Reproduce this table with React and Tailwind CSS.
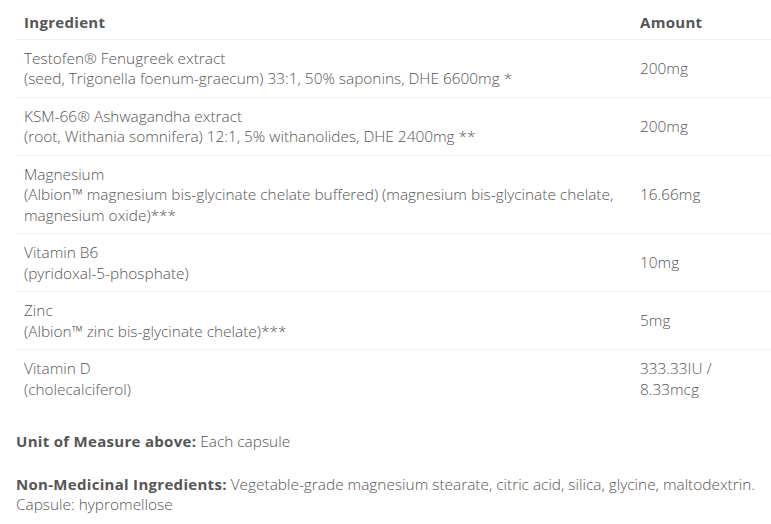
const rows = [
  {
    name: "Testofen® Fenugreek extract",
    detail: "(seed, Trigonella foenum-graecum) 33:1, 50% saponins, DHE 6600mg *",
    amount: "200mg",
  },
  {
    name: "KSM-66® Ashwagandha extract",
    detail: "(root, Withania somnifera) 12:1, 5% withanolides, DHE 2400mg **",
    amount: "200mg",
  },
  {
    name: "Magnesium",
    detail:
      "(Albion™ magnesium bis-glycinate chelate buffered) (magnesium bis-glycinate chelate, magnesium oxide)***",
    amount: "16.66mg",
  },
  { name: "Vitamin B6", detail: "(pyridoxal-5-phosphate)", amount: "10mg" },
  { name: "Zinc", detail: "(Albion™ zinc bis-glycinate chelate)***", amount: "5mg" },
  { name: "Vitamin D", detail: "(cholecalciferol)", amount: "333.33IU / 8.33mcg" },
];

export default function App() {
  return (
    <div className="pl-4 bg-white text-[#555] text-[15.4px] leading-[20.5px] font-light font-['Open_Sans',sans-serif]">
      {/* Table */}
      <table className="w-full border-collapse">
        <thead>
          <tr className="border-b border-[#efefef]">
            <th className="text-left text-[15px] font-bold tracking-[0.3px] px-2 pt-[12px] pb-[6px]">Ingredient</th>
            <th className="text-left text-[15px] font-bold tracking-[0.3px] px-2 pt-[12px] pb-[6px] w-[139px]">Amount</th>
          </tr>
        </thead>
        <tbody>
          {rows.map((r, i) => (
            <tr
              key={r.name}
              className={i < rows.length - 1 ? "border-b border-[#efefef]" : ""}
            >
              <td className="align-top px-2 pt-[9px] pb-[7px]">
                {r.name}
                <br />
                {r.detail}
              </td>
              <td className="align-middle px-2 pt-[9px] pb-[7px]">
                <div className="w-[80px]">{r.amount}</div>
              </td>
            </tr>
          ))}
        </tbody>
      </table>

      {/* Notes */}
      <p className="mt-[24px]">
        <strong className="text-[15px] font-bold tracking-[0.3px]">Unit of Measure above:</strong> Each capsule
      </p>
      <p className="mt-[21px] pr-2">
        <strong className="text-[15px] font-bold tracking-[0.3px]">Non-Medicinal Ingredients:</strong> Vegetable-grade
        magnesium stearate, citric acid, silica, glycine, maltodextrin.
        <br />
        Capsule: hypromellose
      </p>
    </div>
  );
}
